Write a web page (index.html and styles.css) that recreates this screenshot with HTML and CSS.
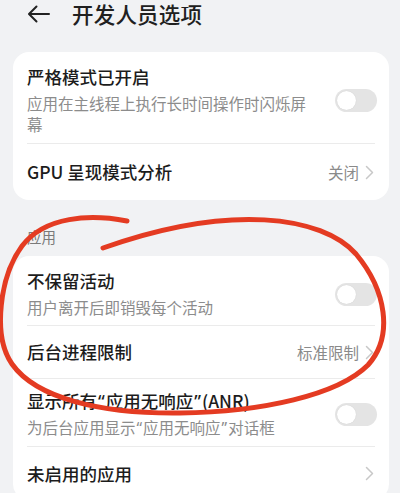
FILE: index.html
```html
<!DOCTYPE html>
<html lang="zh-CN">
<head>
<meta charset="utf-8">
<title>开发人员选项</title>
<link rel="stylesheet" href="styles.css">
</head>
<body>
<div class="page">
  <header class="header">
    <svg class="back" width="24" height="18" viewBox="0 0 24 18"><path d="M22 9H2.5M9.5 1.5L2 9l7.5 7.5" fill="none" stroke="#222" stroke-width="2" stroke-linecap="round" stroke-linejoin="round"/></svg>
    <h1 class="title">开发人员选项</h1>
  </header>

  <section class="card card-first">
    <div class="row row-two row-first">
      <div class="text">
        <div class="name">严格模式已开启</div>
        <div class="desc">应用在主线程上执行长时间操作时闪烁屏幕</div>
      </div>
      <span class="toggle"><span class="knob"></span></span>
    </div>
    <div class="divider"></div>
    <div class="row row-one row-gpu">
      <div class="name">GPU 呈现模式分析</div>
      <div class="value">关闭<svg class="chev" width="9" height="15" viewBox="0 0 9 15"><path d="M1.5 1.5L7.5 7.5 1.5 13.5" fill="none" stroke="#c8c8c8" stroke-width="1.5" stroke-linecap="round" stroke-linejoin="round"/></svg></div>
    </div>
  </section>

  <div class="group-label">应用</div>

  <section class="card">
    <div class="row row-two">
      <div class="text">
        <div class="name">不保留活动</div>
        <div class="desc">用户离开后即销毁每个活动</div>
      </div>
      <span class="toggle"><span class="knob"></span></span>
    </div>
    <div class="divider"></div>
    <div class="row row-one">
      <div class="name">后台进程限制</div>
      <div class="value">标准限制<svg class="chev" width="9" height="15" viewBox="0 0 9 15"><path d="M1.5 1.5L7.5 7.5 1.5 13.5" fill="none" stroke="#c8c8c8" stroke-width="1.5" stroke-linecap="round" stroke-linejoin="round"/></svg></div>
    </div>
    <div class="divider"></div>
    <div class="row row-two row-tight">
      <div class="text">
        <div class="name">显示所有<span class="q">“</span>应用无响应<span class="q">”</span>(ANR)</div>
        <div class="desc">为后台应用显示<span class="q">“</span>应用无响应<span class="q">”</span>对话框</div>
      </div>
      <span class="toggle"><span class="knob"></span></span>
    </div>
    <div class="divider"></div>
    <div class="row row-one row-last">
      <div class="name">未启用的应用</div>
      <div class="value"><svg class="chev" width="9" height="15" viewBox="0 0 9 15"><path d="M1.5 1.5L7.5 7.5 1.5 13.5" fill="none" stroke="#c8c8c8" stroke-width="1.5" stroke-linecap="round" stroke-linejoin="round"/></svg></div>
    </div>
  </section>

  <svg class="scribble" width="400" height="493" viewBox="0 0 400 493">
    <path d="M127 221 C 90 214, 45 216, 22 246 C 0 276, -8 335, 12 364 C 36 398, 100 414, 180 413 C 262 412, 338 395, 368 365 C 394 336, 386 290, 356 254 C 322 216, 230 203, 103 248" fill="none" stroke="#e43b22" stroke-width="5" stroke-linecap="round" stroke-linejoin="round"/>
  </svg>
</div>
</body>
</html>
```

FILE: styles.css
```css
html, body {
  margin: 0;
  padding: 0;
}
body {
  background: #f1f2f4;
  font-family: "Noto Sans CJK SC", "Noto Sans", sans-serif;
  color: #1c1c1c;
  overflow: hidden;
  width: 400px;
  height: 493px;
}
.page {
  position: relative;
  width: 400px;
  height: 493px;
  overflow: hidden;
}
.header {
  display: flex;
  align-items: center;
  height: 24px;
  padding-top: 2px;
  padding-left: 27px;
}
.back {
  display: block;
  margin-right: 21px;
}
.title {
  margin: 0;
  font-size: 21.5px;
  font-weight: 500;
  line-height: 22px;
  color: #202020;
  letter-spacing: 0.2px;
}
.card {
  background: #ffffff;
  border-radius: 16px;
  margin-left: 13px;
  width: 376px;
  padding: 0 12px 0 14px;
  box-sizing: border-box;
}
.card-first {
  margin-top: 26px;
}
.row {
  display: flex;
  align-items: center;
  justify-content: space-between;
}
.row-two {
  padding: 12px 0 7px;
}
.row-first {
  padding-bottom: 8px;
}
.row-tight {
  padding: 9px 0 7px;
}
.row-one {
  height: 52px;
}
.row-gpu {
  height: 56px;
}
.row-last {
  height: 53px;
}
.text {
  max-width: 288px;
}
.name {
  font-size: 17.5px;
  line-height: 26px;
  font-weight: 500;
  color: #1c1c1c;
}
.desc {
  margin-top: 3px;
  font-size: 15.5px;
  line-height: 21px;
  color: #8c8c8c;
}
.q {
  font-family: "Noto Sans", "DejaVu Sans", sans-serif;
  padding: 0 1px;
}
.value {
  display: flex;
  align-items: center;
  gap: 6px;
  font-size: 15.5px;
  color: #8a8a8a;
  padding-right: 3px;
}
.chev {
  display: block;
}
.divider {
  height: 1px;
  background: #ebebeb;
  margin-right: 2px;
}
.toggle {
  flex: none;
  position: relative;
  width: 42px;
  height: 23px;
  border-radius: 12px;
  background: #e4e4e4;
  align-self: center;
  margin-top: 2px;
}
.knob {
  position: absolute;
  left: 2px;
  top: 2px;
  width: 19px;
  height: 19px;
  border-radius: 50%;
  background: #fff;
  box-shadow: 0 0 1px rgba(0,0,0,0.15);
}
.group-label {
  margin: 26px 0 9px 27px;
  font-size: 14.5px;
  line-height: 21px;
  color: #7a7a7a;
}
.scribble {
  position: absolute;
  left: 0;
  top: 0;
  pointer-events: none;
}
```
